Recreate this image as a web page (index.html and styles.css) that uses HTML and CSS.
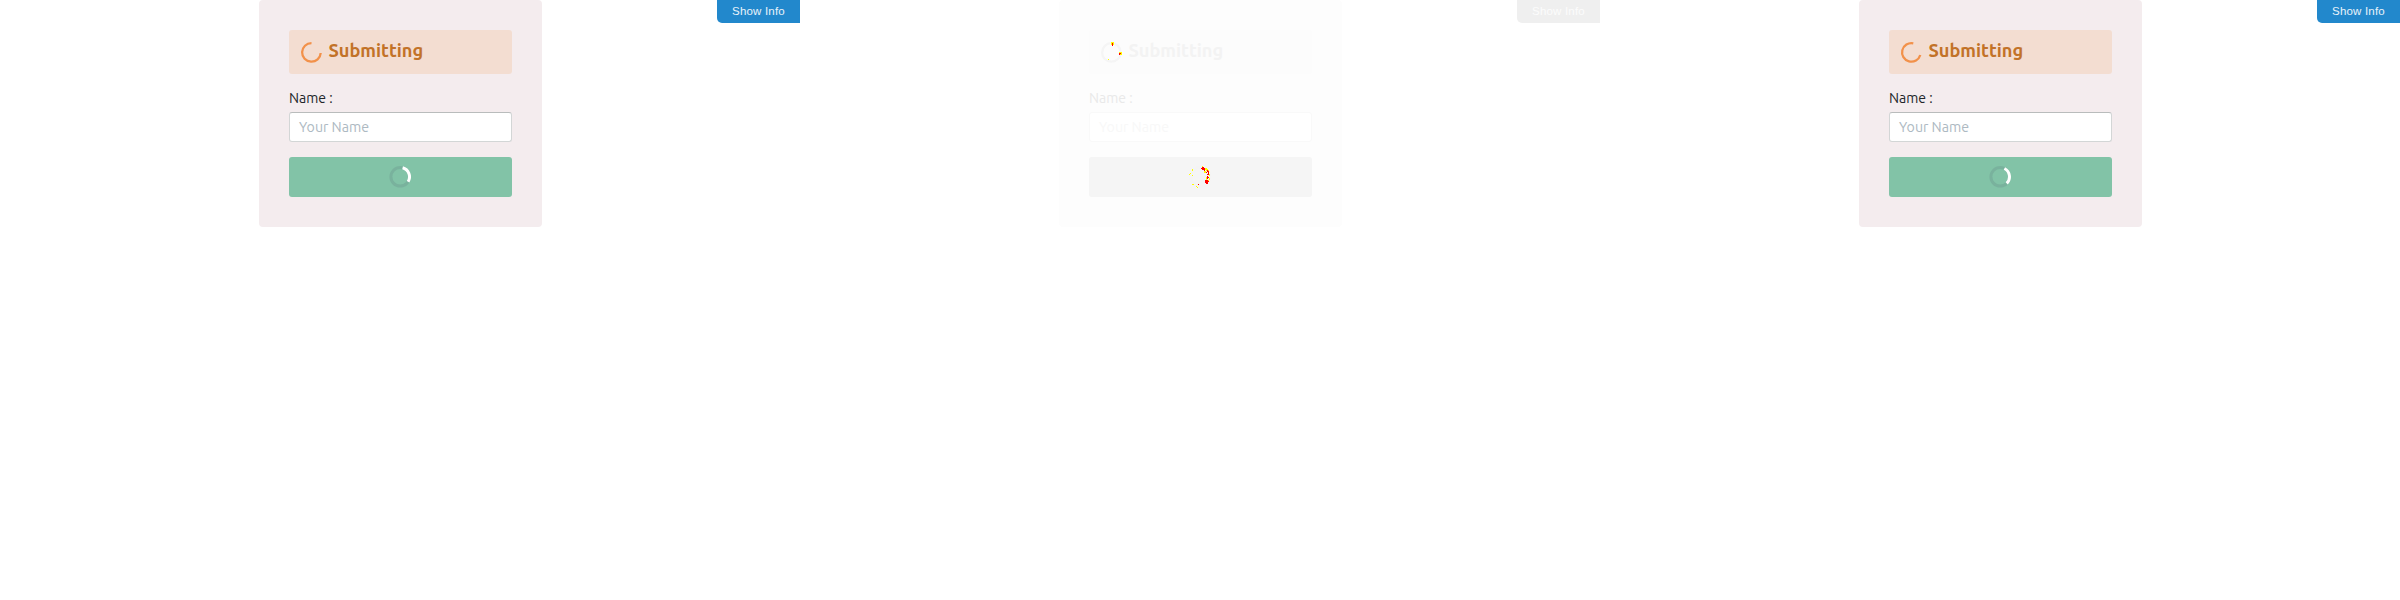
FILE: index.html
```
<!DOCTYPE html>
<html lang="en">
<head>
<meta charset="utf-8">
<title>Submitting</title>
<link rel="stylesheet" href="styles.css">
</head>
<body>
<main class="frames">
  <section class="frame">
    <div class="card">
      <div class="status">
        <svg class="spinner" viewBox="0 0 24 24"><path class="arc" d="M12.5 3.1A9.3 9.3 0 1 0 21.7 13"/></svg>
        <strong class="status-text">Submitting</strong>
      </div>
      <label class="label">Name :</label>
      <div class="field"><span class="placeholder">Your Name</span></div>
      <div class="submit">
        <svg class="spinner" viewBox="0 0 24 24"><circle class="track" cx="13.2" cy="12.8" r="9.3"/><path class="head" d="M15.6 3.8A9.3 9.3 0 0 1 21.1 17.7"/></svg>
      </div>
    </div>
    <div class="info">Show Info</div>
  </section>
  <section class="frame diff">
    <div class="card">
      <div class="status">
        <svg class="spinner" viewBox="0 0 24 24" shape-rendering="crispEdges"><circle class="arc" cx="12.4" cy="12.4" r="9.3" shape-rendering="auto"/>
          <path class="minor" d="M12 2h3v3h-3zM20 12h3v3h-3zM9 19h1v1h-1z"/><path class="major" d="M13 3h1v3h-1zM20 13h2v1h-2zM20 14h1v1h-1z"/></svg>
        <strong class="status-text">Submitting</strong>
      </div>
      <label class="label">Name :</label>
      <div class="field"><span class="placeholder">Your Name</span></div>
      <div class="submit">
        <svg class="spinner" viewBox="0 0 24 24" shape-rendering="crispEdges"><circle class="track" cx="13.2" cy="12.8" r="9.3" shape-rendering="auto"/>
          <path class="minor" d="M15 2h1v1h-1zM18 4h2v1h1v1h1v2h-2v-1h-1v-1h-1zM17 7h2v2h-2zM22 10h1v2h-1zM19 13h1v3h-1zM22 14h1v2h-1zM21 16h1v1h-1zM5 5h1v2h-1zM3 9h1v1h-1zM2 10h1v1h-1zM5 11h1v1h-1zM5 20h2v1h-2zM9 22h1v1h-1zM10 23h1v1h-1zM20 19h1v1h-1z"/>
          <path class="major" d="M15 3h2v1h1v3h-1v-1h-2v-1h-1v-1h1zM20 6h1v1h1v4h-1v-3h-1zM19 8h1v1h-1zM20 10h1v1h-1zM20 12h1v3h-1zM21 13h1v1h-1zM18 16h3v1h1v1h-1v2h-2v-1h-1zM11 20h1v1h-1z"/></svg>
      </div>
    </div>
    <div class="info">Show Info</div>
  </section>
  <section class="frame">
    <div class="card">
      <div class="status">
        <svg class="spinner" viewBox="0 0 24 24"><path class="arc" d="M14.3 3.3A9.3 9.3 0 1 0 21.3 15"/></svg>
        <strong class="status-text">Submitting</strong>
      </div>
      <label class="label">Name :</label>
      <div class="field"><span class="placeholder">Your Name</span></div>
      <div class="submit">
        <svg class="spinner" viewBox="0 0 24 24"><circle class="track" cx="13.2" cy="12.8" r="9.3"/><path class="head" d="M17.4 4.5A9.3 9.3 0 0 1 19.7 19.4"/></svg>
      </div>
    </div>
    <div class="info">Show Info</div>
  </section>
</main>
</body>
</html>
```
FILE: styles.css
```
* { box-sizing: border-box; }
body { margin: 0; background: #fff; font-family: Ubuntu, "Noto Sans", sans-serif; }
.frames { display: grid; grid-template-columns: repeat(3, 800px); height: 600px; }
.frame { display: grid; grid-template-columns: 259px 283px 1fr; align-items: start; }
.card { grid-column: 2; display: flex; flex-direction: column; height: 227px; padding: 30px; border-radius: 4px; background: #f4ecee; }
.status { display: flex; height: 44px; padding: 10px 0 0 10px; border-radius: 3px; background: #f3ddd1; }
.spinner { display: block; width: 24px; height: 24px; flex: none; fill: none; }
.arc { stroke: #f2914a; stroke-width: 2.3; }
.track { stroke: #79b29d; stroke-width: 3; }
.head { stroke: #fff; stroke-width: 3; }
.status-text { margin-left: 5.5px; margin-top: -2px; font-size: 18.2px; line-height: 24px; font-weight: 700; color: #c27228; white-space: nowrap; }
.label { height: 22px; margin-top: 13px; margin-bottom: 3px; font-size: 14px; line-height: 22px; color: #212529; white-space: nowrap; }
.field { display: flex; align-items: center; height: 30px; padding-left: 9px; border: 1px solid #d3d6d6; border-top-color: #b9bcbc; border-radius: 3px; background: #fff; }
.placeholder { font-size: 14.2px; line-height: 20px; color: #adb9c2; white-space: nowrap; }
.submit { display: flex; justify-content: center; height: 40px; margin-top: 15px; padding: 7px 3px 0 0; border-radius: 3px; background: #82c3a7; }
.info { justify-self: end; width: 83px; height: 23px; border-radius: 0 0 0 5px; background: #2288cc; color: #e9f3fa; font: 11.5px/23px "Liberation Sans", Arial, sans-serif; letter-spacing: 0.2px; text-align: center; }
.diff .card { background: #fdfdfd; }
.diff .status { background: #fcfcfc; }
.diff .arc { stroke: #f5f5f5; }
.diff .track { stroke: #f4f4f4; }
.diff .status-text { color: #f3f3f3; }
.diff .label { color: #e9e9e9; }
.diff .field { border-color: #f9f9f9; }
.diff .placeholder { color: #f8f8f8; }
.diff .submit { background: #f5f5f5; }
.diff .info { background: #efefef; color: #fcfcfc; }
.minor { fill: #ff0; }
.major { fill: #f00; }
```
